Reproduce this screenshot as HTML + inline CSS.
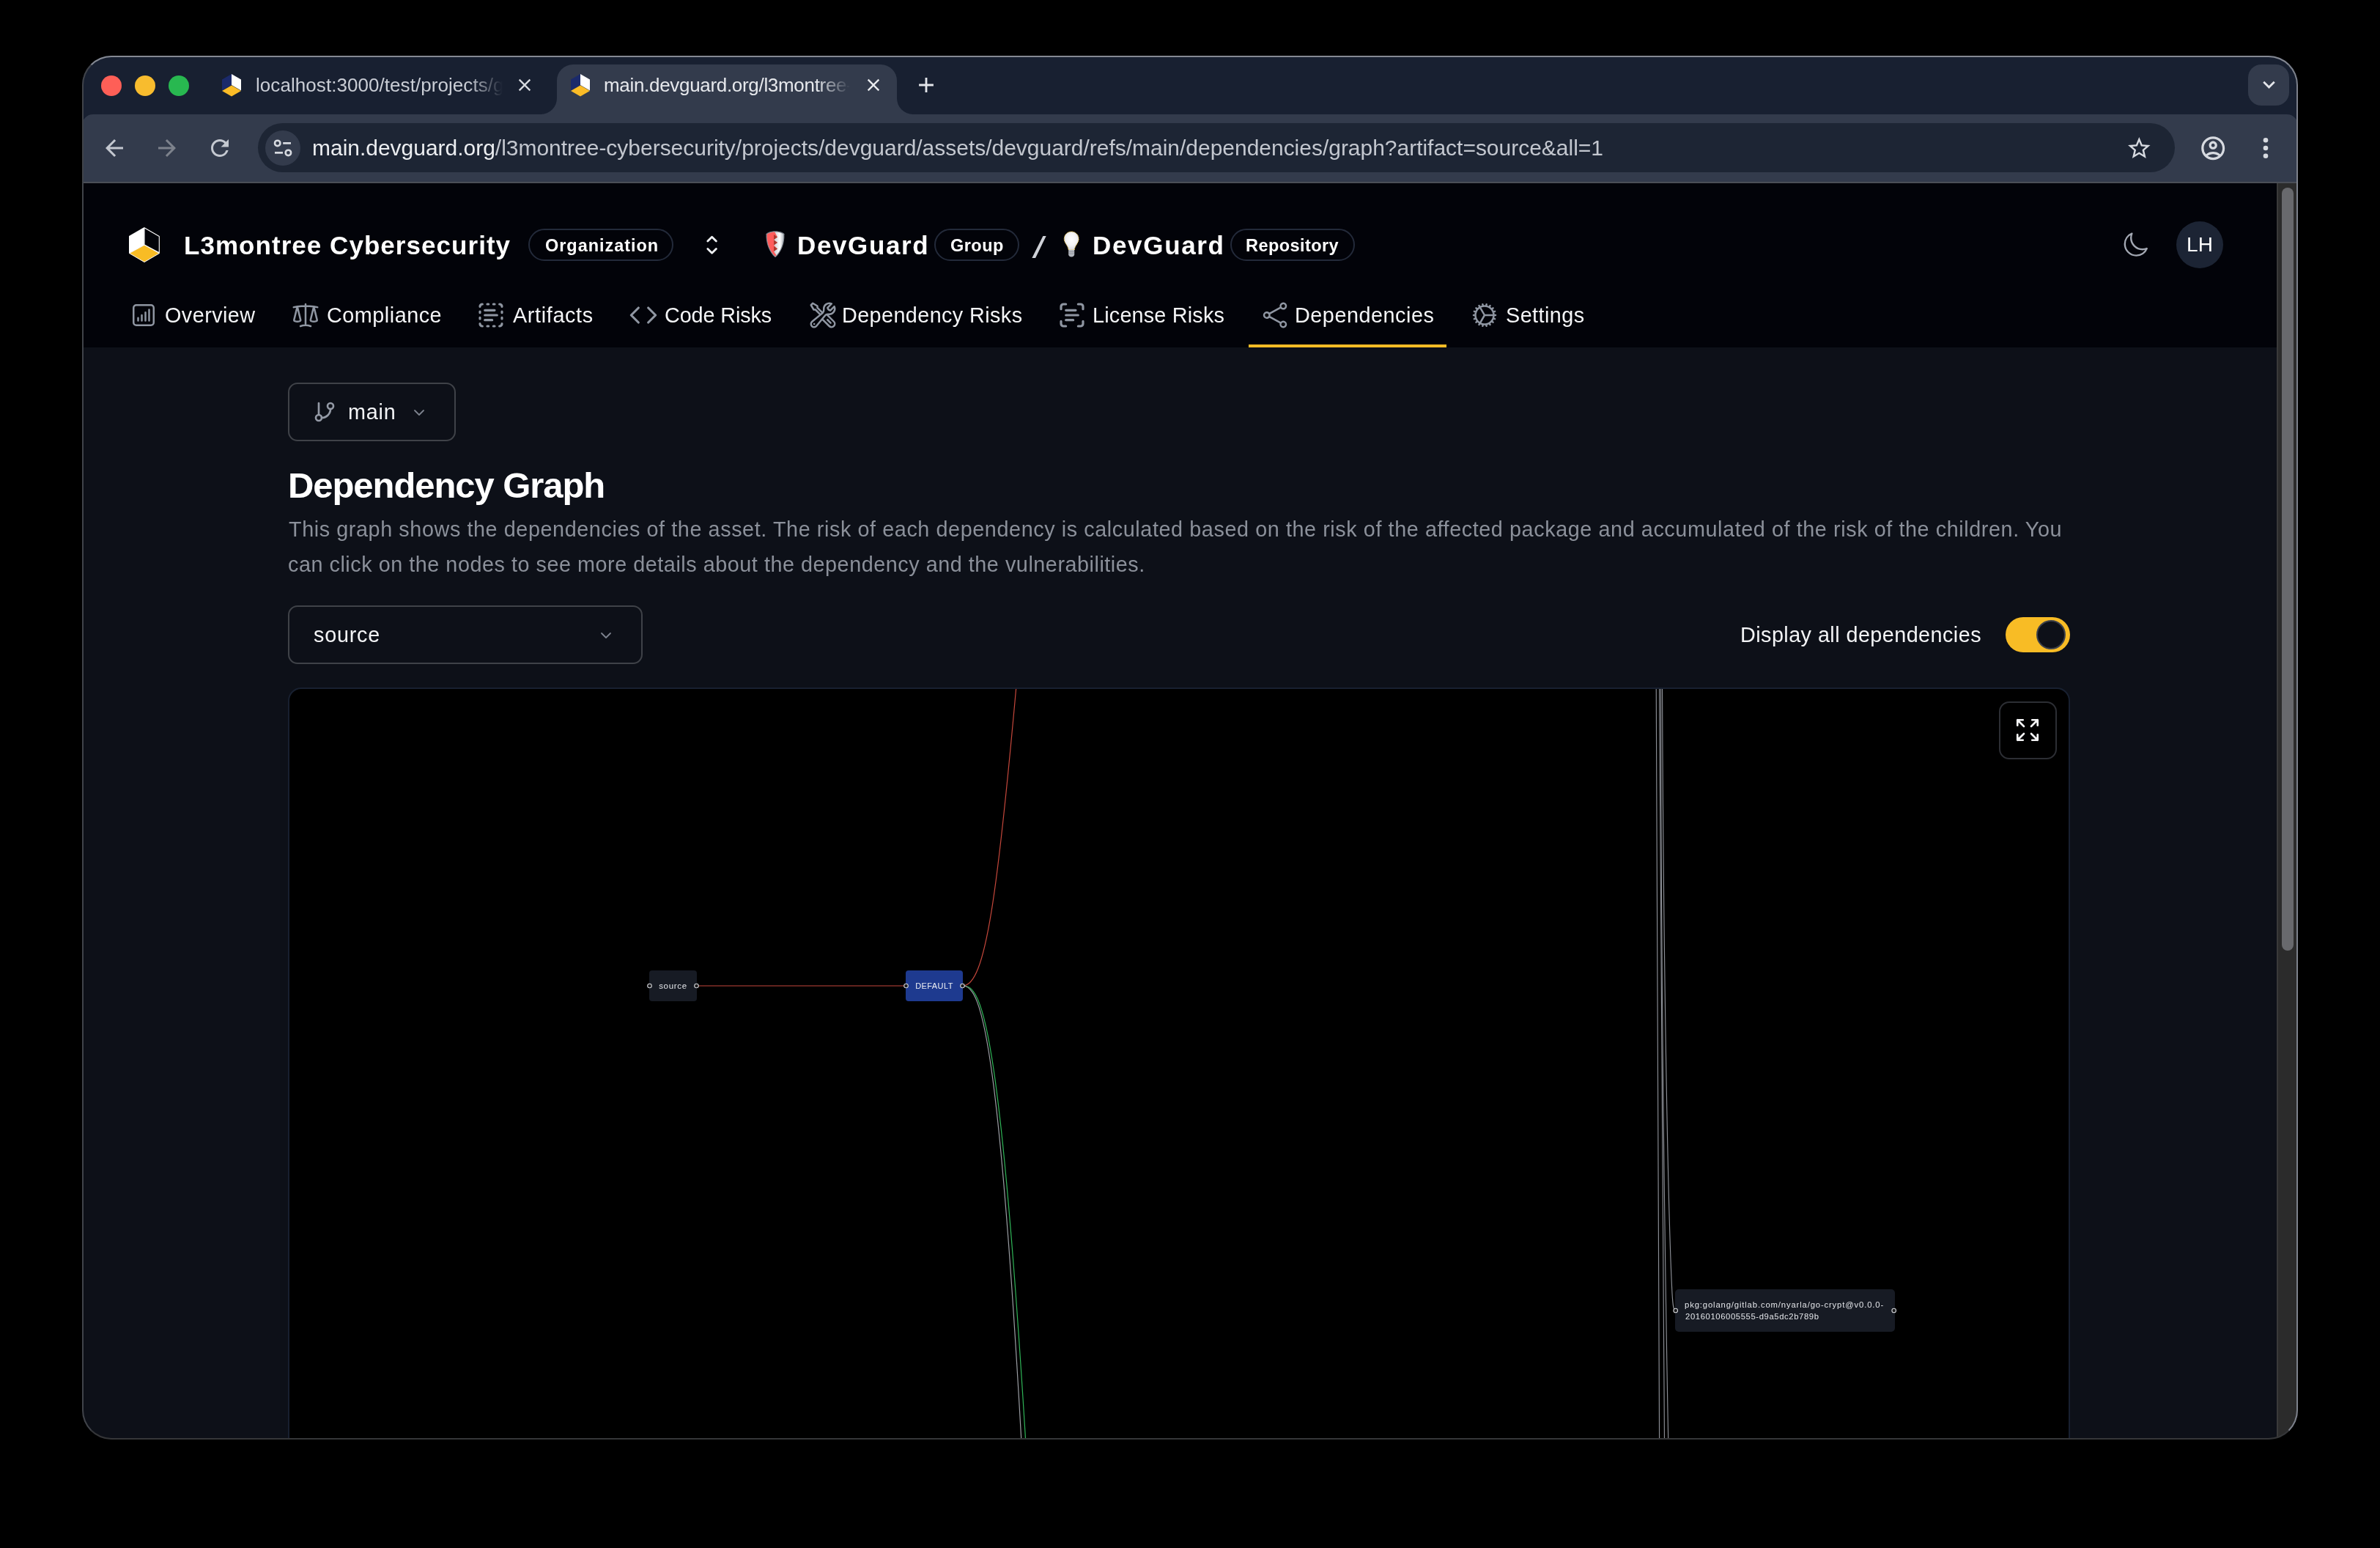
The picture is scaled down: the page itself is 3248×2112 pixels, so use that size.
<!DOCTYPE html>
<html lang="en">
<head>
<meta charset="utf-8">
<title>DevGuard - Dependency Graph</title>
<style>
*{box-sizing:border-box;margin:0;padding:0}
html,body{width:3248px;height:2112px;background:#000;overflow:hidden}
body{position:relative;font-family:"Liberation Sans",sans-serif;color:#fff}
.abs{position:absolute;display:block}
.t{position:absolute;white-space:nowrap;line-height:40px;height:40px;display:block;will-change:transform}
svg{position:absolute;overflow:visible;display:block}
/* ---------- window ---------- */
#win{position:absolute;left:0;top:0;width:3248px;height:2112px;clip-path:inset(76px 112px 148px 112px round 40px);background:#0d1018}
#winborder{position:absolute;left:112px;top:76px;width:3024px;height:1888px;border-radius:40px;border:2px solid;border-color:#858993 #7d818b #353638 #404349}
/* chrome */
#tabstrip{left:112px;top:76px;width:3024px;height:110px;background:#182031}
#toolbar{left:112px;top:156px;width:3024px;height:93px;background:#333b4c;border-radius:15px 15px 0 0}
#tbline{left:112px;top:248px;width:3024px;height:2px;background:#4a4e57}
#acttab{left:760px;top:88px;width:464px;height:68px;background:#333b4c;border-radius:22px 22px 0 0}
.foot{width:22px;height:22px;top:134px;background:#333b4c;position:absolute}
.foot i{position:absolute;left:0;top:0;width:22px;height:22px;background:#182031;display:block}
#omni{left:352px;top:168px;width:2616px;height:67px;border-radius:34px;background:#1d2534}
#siteinfo{left:362px;top:178px;width:48px;height:48px;border-radius:24px;background:#333b4c}
#tabsearch{left:3068px;top:88px;width:56px;height:56px;border-radius:18px;background:#333b4c}
.tl{width:28px;height:28px;border-radius:14px;top:103px;position:absolute}
/* page */
#header{left:112px;top:250px;width:2995px;height:224px;background:#020309}
#sbtrack{left:3107px;top:250px;width:29px;height:1714px;background:#2b2b2b;border-left:2px solid #3a3a3a}
#sbthumb{left:3114px;top:256px;width:16px;height:1041px;border-radius:8px;background:#68696d}
.badge{position:absolute;height:44px;top:312px;border:2px solid #232a3a;border-radius:22px;display:block}
.nav{color:#f4f5f7;font-size:28.800px}
</style>
</head>
<body>
<div id="win">
  <!-- ===== browser chrome ===== -->
  <div class="abs" id="tabstrip"></div>
  <div class="abs" id="toolbar"></div>
  <div class="abs" id="tbline"></div>
  <div class="abs" id="acttab"></div>
  <div class="foot" style="left:738px"><i style="border-radius:0 0 22px 0"></i></div>
  <div class="foot" style="left:1224px"><i style="border-radius:0 0 0 22px"></i></div>
  <div class="tl" style="left:138px;background:#fe5f57"></div>
  <div class="tl" style="left:184px;background:#f8bc2e"></div>
  <div class="tl" style="left:230px;background:#28b850"></div>
  <div class="abs" id="tabsearch"></div>
  <div class="abs" id="omni"></div>
  <div class="abs" id="siteinfo"></div>
  <!-- favicons -->
  <svg style="left:300px;top:98px" width="32" height="36" viewBox="300 98 32 36"><polygon points="316,101 329,108.5 329,123.5 316,116" fill="#fff"/><polygon points="316,101 316,116 303,123.5 303,108.5" fill="#1b2a6b"/><polygon points="316,116.5 329,124 316,131.5 303,124" fill="#fbbc27"/></svg>
  <svg style="left:776px;top:98px" width="32" height="36" viewBox="300 98 32 36"><polygon points="316,101 329,108.5 329,123.5 316,116" fill="#fff"/><polygon points="316,101 316,116 303,123.5 303,108.5" fill="#1b2a6b"/><polygon points="316,116.5 329,124 316,131.5 303,124" fill="#fbbc27"/></svg>
  <!-- tab close / new tab -->
  <svg style="left:702px;top:102px" width="28" height="28" viewBox="0 0 24 24"><path fill="#d5d8de" d="M19 6.41L17.59 5 12 10.59 6.41 5 5 6.41 10.59 12 5 17.59 6.41 19 12 13.41 17.59 19 19 17.59 13.41 12z"/></svg>
  <svg style="left:1178px;top:102px" width="28" height="28" viewBox="0 0 24 24"><path fill="#e8eaee" d="M19 6.41L17.59 5 12 10.59 6.41 5 5 6.41 10.59 12 5 17.59 6.41 19 12 13.41 17.59 19 19 17.59 13.41 12z"/></svg>
  <svg style="left:1247px;top:99px" width="34" height="34" viewBox="0 0 24 24"><path fill="#e3e5ea" d="M19 13h-6v6h-2v-6H5v-2h6V5h2v6h6v2z"/></svg>
  <svg style="left:3079.500px;top:99px" width="33" height="33" viewBox="0 0 24 24"><path fill="#e3e5ea" d="M7.41 8.59L12 13.17l4.59-4.58L18 10l-6 6-6-6z"/></svg>
  <!-- nav buttons -->
  <svg style="left:138px;top:184px" width="36" height="36" viewBox="0 0 24 24"><path fill="#c4c8d0" d="M20 11H7.83l5.59-5.59L12 4l-8 8 8 8 1.41-1.41L7.83 13H20v-2z"/></svg>
  <svg style="left:210px;top:184px" width="36" height="36" viewBox="0 0 24 24"><path fill="#7d828c" d="M4 11h12.170l-5.590-5.590L12 4l8 8-8 8-1.410-1.410L16.170 13H4v-2z"/></svg>
  <svg style="left:282px;top:184px" width="36" height="36" viewBox="0 0 24 24"><path fill="#c4c8d0" d="M17.65 6.35A7.958 7.958 0 0 0 12 4c-4.42 0-7.990 3.580-7.990 8s3.570 8 7.990 8c3.730 0 6.840-2.550 7.730-6h-2.080A5.990 5.990 0 0 1 12 18c-3.310 0-6-2.690-6-6s2.690-6 6-6c1.660 0 3.140.69 4.220 1.780L13 11h7V4l-2.350 2.350z"/></svg>
  <!-- site info (tune) -->
  <svg style="left:362px;top:178px" width="48" height="48" viewBox="362 178 48 48" fill="none" stroke="#d7dae0" stroke-width="2.600"><circle cx="378.700" cy="195.400" r="3.700"/><path d="M386.200 195.400H397"/><circle cx="393.400" cy="208.400" r="3.700"/><path d="M375 208.400h11"/></svg>
  <!-- star, profile, menu -->
  <svg style="left:2900.700px;top:184px" width="36.600" height="36.600" viewBox="0 0 24 24"><path fill="#d7dae0" d="M22 9.240l-7.190-.62L12 2 9.190 8.630 2 9.240l5.460 4.730L5.820 21 12 17.270 18.180 21l-1.630-7.030L22 9.240zM12 15.400l-3.760 2.270 1-4.280-3.320-2.880 4.380-.38L12 6.100l1.710 4.040 4.380.38-3.320 2.880 1 4.280L12 15.400z"/></svg>
  <svg style="left:3000.800px;top:182.800px" width="38.400" height="38.400" viewBox="0 0 24 24"><path fill="#d7dae0" d="M12 2C6.480 2 2 6.480 2 12s4.480 10 10 10 10-4.480 10-10S17.520 2 12 2zM7.350 18.500C8.660 17.560 10.260 17 12 17s3.340.56 4.650 1.500c-1.310.94-2.910 1.500-4.650 1.500s-3.340-.56-4.650-1.500zm10.790-1.380a9.947 9.947 0 0 0-12.280 0A7.957 7.957 0 0 1 4 12c0-4.420 3.580-8 8-8s8 3.580 8 8c0 1.950-.7 3.730-1.860 5.120zM12 6c-1.930 0-3.500 1.570-3.500 3.500S10.070 13 12 13s3.500-1.570 3.500-3.500S13.930 6 12 6zm0 5c-.83 0-1.500-.67-1.500-1.500S11.170 8 12 8s1.500.67 1.500 1.500S12.830 11 12 11z"/></svg>
  <svg style="left:3080px;top:180px" width="24" height="44" viewBox="3080 180 24 44" fill="#d7dae0"><circle cx="3092" cy="191.300" r="3.300"/><circle cx="3092" cy="202" r="3.300"/><circle cx="3092" cy="212.800" r="3.300"/></svg>
  <!-- chrome text -->
  <span class="t" id="tab1" style="left:349px;top:96px;width:337px;overflow:hidden;font-size:26px;color:#c9cdd5;-webkit-mask-image:linear-gradient(90deg,#000 0,#000 290px,transparent 337px)"><span id="tab1a" style="letter-spacing:0.061px">localhost:3000/test/projects/</span>gitlab</span>
  <span class="t" id="tab2" style="left:824px;top:96px;width:336px;overflow:hidden;font-size:26px;color:#e6e8ec;-webkit-mask-image:linear-gradient(90deg,#000 0,#000 290px,transparent 336px)"><span id="tab2a" style="letter-spacing:-0.313px">main.devguard.org/l3montree</span>-cyber</span>
  <span class="t" id="url" style="left:426.0px;top:182px;font-size:30px;color:#c3c7cf;letter-spacing:-0.019px"><span style="color:#eceef1">main.devguard.org</span>/l3montree-cybersecurity/projects/devguard/assets/devguard/refs/main/dependencies/graph?artifact=source&amp;all=1</span>

  <!-- ===== page ===== -->
  <div class="abs" id="header"></div>
  <div class="abs" id="sbtrack"></div>
  <div class="abs" id="sbthumb"></div>
  <!-- logo -->
  <svg style="left:174px;top:308px" width="46" height="52" viewBox="174 308 46 52"><polygon points="196.800,310 196.800,334.500 176,345.800 176,322" fill="#fff"/><polygon points="197,310.800 217.300,322.500 217.300,344.800 197,334" fill="#020309" stroke="#fff" stroke-width="1.100" stroke-linejoin="round"/><polygon points="197,334.300 217.500,345.500 197,357.600 176.500,345.500" fill="#f8bc25" stroke="#fff" stroke-width="1"/></svg>
  <span class="t" id="org" style="left:251.0px;top:314.500px;font-size:35px;font-weight:700;color:#fff;letter-spacing:1.044px">L3montree Cybersecurity</span>
  <span class="badge" style="left:721px;width:198px"></span>
  <span class="t" id="b1" style="left:743.6px;top:314.900px;font-size:23.500px;font-weight:700;letter-spacing:0.962px">Organization</span>
  <svg style="left:960px;top:318px" width="24" height="32" viewBox="960 318 24 32" fill="none" stroke="#eef0f3" stroke-width="2.800" stroke-linecap="round" stroke-linejoin="round"><path d="M965.800 329 971.600 323.200 977.400 329M965.800 339.500 971.600 345.300 977.400 339.500"/></svg>
  <!-- shield emoji -->
  <svg style="left:1044px;top:314px" width="28" height="38" viewBox="1044 314 28 38"><defs><linearGradient id="sg" x1="0" x2="1" y1="0" y2="0"><stop offset="0" stop-color="#aab0b8"/><stop offset=".45" stop-color="#c9cdd2"/><stop offset=".72" stop-color="#ffffff"/><stop offset="1" stop-color="#8d949d"/></linearGradient><clipPath id="sc"><path d="M1058 316.500C1052.500 316.500 1047.500 318.600 1046.800 319.800C1046.200 331 1050.500 343 1058 350C1065.500 343 1069.800 331 1069.200 319.800C1068.500 318.600 1063.500 316.500 1058 316.500Z"/></clipPath></defs><path d="M1058 315.300C1052 315.300 1046.600 317.600 1045.600 319.200C1044.900 331.500 1049.600 344.200 1058 351.300C1066.400 344.200 1071.100 331.500 1070.400 319.200C1069.400 317.600 1064 315.300 1058 315.300Z" fill="#7b828b"/><g clip-path="url(#sc)"><rect x="1044" y="314" width="28" height="38" fill="url(#sg)"/><path d="M1044 314H1056L1061 323.500 1056 327 1061 331 1056 334.500 1061 339.500 1056 343 1060 349 1050 352 1044 340Z" fill="#ff5c5c"/><path d="M1056 320 1061 323.500 1056 327ZM1056 327.500 1061 331 1056 334.500ZM1056 336 1061 339.500 1056 343Z" fill="#a93a30"/></g></svg>
  <span class="t" id="dg1" style="left:1087.9px;top:314.500px;font-size:35px;font-weight:700;letter-spacing:1.617px">DevGuard</span>
  <span class="badge" style="left:1275px;width:116px"></span>
  <span class="t" id="b2" style="left:1297.0px;top:314.900px;font-size:23.500px;font-weight:700;letter-spacing:0.475px">Group</span>
  <svg style="left:1404px;top:318px" width="28" height="38" viewBox="1404 318 28 38"><polygon points="1423.400,322 1427.700,322 1413.100,352 1408.400,352" fill="#cfd2d8"/></svg>
  <!-- bulb emoji -->
  <svg style="left:1450px;top:314px" width="26" height="38" viewBox="1450 314 26 38"><defs><radialGradient id="bg" cx=".5" cy=".42" r=".55"><stop offset="0" stop-color="#fff"/><stop offset=".6" stop-color="#f4f4f6"/><stop offset="1" stop-color="#dcdce0"/></radialGradient></defs><path d="M1462.200 316c-5.600 0-10 4.400-10 10 0 3.400 2 6 3.800 9 1.100 1.900 1.800 3.600 2.100 6h8.200c.3-2.400 1-4.100 2.100-6 1.800-3 3.800-5.600 3.800-9 0-5.600-4.400-10-10-10z" fill="url(#bg)" stroke="#f5c62c" stroke-width="1" stroke-dasharray="1.200 1.300"/><path d="M1458.200 341h8v6.200c0 1.600-1.600 3.300-4 3.300s-4-1.700-4-3.300z" fill="#b3b7be"/><path d="M1458.200 343.500h8M1458.200 346h8" stroke="#8d9199" stroke-width=".8"/></svg>
  <span class="t" id="dg2" style="left:1490.8px;top:314.500px;font-size:35px;font-weight:700;letter-spacing:1.674px">DevGuard</span>
  <span class="badge" style="left:1679px;width:170px"></span>
  <span class="t" id="b3" style="left:1700.3px;top:314.900px;font-size:23.500px;font-weight:700;letter-spacing:0.428px">Repository</span>
  <!-- moon + avatar -->
  <svg style="left:2894.700px;top:314.900px" width="38.400" height="38.400" viewBox="0 0 24 24" fill="none" stroke="#a3a8b3" stroke-width="1.500" stroke-linecap="round" stroke-linejoin="round"><path d="M21.752 15.002A9.720 9.720 0 0 1 18 15.750c-5.385 0-9.750-4.365-9.750-9.750 0-1.330.266-2.597.748-3.752A9.753 9.753 0 0 0 3 11.250C3 16.635 7.365 21 12.750 21a9.753 9.753 0 0 0 9.002-5.998Z"/></svg>
  <span class="abs" style="left:2970px;top:302px;width:64px;height:64px;border-radius:32px;background:#1c2434"></span>
  <span class="t" id="lh" style="left:2970px;top:314px;width:64px;text-align:center;font-size:28px;color:#fff">LH</span>
  <!-- nav icons (40px, top 410) -->
  <svg style="left:176px;top:410px" width="40" height="40" viewBox="0 0 24 24" fill="none" stroke="#8f96a2" stroke-width="1.500" stroke-linecap="round" stroke-linejoin="round"><path d="M7.500 14.250v2.250m3-4.500v4.500m3-6.750v6.750m3-9v9M6 20.250h12A2.250 2.250 0 0 0 20.250 18V6A2.250 2.250 0 0 0 18 3.750H6A2.250 2.250 0 0 0 3.750 6v12A2.250 2.250 0 0 0 6 20.250Z"/></svg>
  <svg style="left:397px;top:410px" width="40" height="40" viewBox="0 0 24 24" fill="none" stroke="#8f96a2" stroke-width="1.500" stroke-linecap="round" stroke-linejoin="round"><path d="M12 3v17.250m0 0c-1.472 0-2.882.265-4.185.750M12 20.250c1.472 0 2.882.265 4.185.750M18.750 4.970A48.416 48.416 0 0 0 12 4.500c-2.291 0-4.545.160-6.750.470m13.500 0c1.010.143 2.010.317 3 .520m-3-.520 2.620 10.726c.122.499-.106 1.028-.589 1.202a5.988 5.988 0 0 1-2.031.352 5.988 5.988 0 0 1-2.031-.352c-.483-.174-.711-.703-.590-1.202L18.750 4.971Zm-16.500.520c.990-.203 1.990-.377 3-.520m0 0 2.620 10.726c.122.499-.106 1.028-.589 1.202a5.989 5.989 0 0 1-2.031.352 5.989 5.989 0 0 1-2.031-.352c-.483-.174-.711-.703-.590-1.202L5.250 4.971Z"/></svg>
  <svg style="left:650px;top:410px" width="40" height="40" viewBox="0 0 24 24" fill="none" stroke="#8f96a2" stroke-width="1.900" stroke-linecap="round" stroke-linejoin="round"><path d="M5 3a2 2 0 0 0-2 2M19 3a2 2 0 0 1 2 2M21 19a2 2 0 0 1-2 2M5 21a2 2 0 0 1-2-2M9 3h1M9 21h1M14 3h1M14 21h1M3 9v1M21 9v1M3 14v1M21 14v1M7 8h8M7 12h10M7 16h6"/></svg>
  <svg style="left:858px;top:410px" width="40" height="40" viewBox="0 0 24 24" fill="none" stroke="#8f96a2" stroke-width="1.900" stroke-linecap="round" stroke-linejoin="round"><path d="m16 18 6-6-6-6M8 6l-6 6 6 6"/></svg>
  <svg style="left:1102.500px;top:410px" width="40" height="40" viewBox="0 0 24 24" fill="none" stroke="#8f96a2" stroke-width="1.500" stroke-linecap="round" stroke-linejoin="round"><path d="M11.420 15.170 17.250 21A2.652 2.652 0 0 0 21 17.250l-5.877-5.877M11.420 15.170l2.496-3.030c.317-.384.740-.626 1.208-.766M11.420 15.170l-4.655 5.653a2.548 2.548 0 1 1-3.586-3.586l6.837-5.630m5.108-.233c.550-.164 1.163-.188 1.743-.140a4.500 4.500 0 0 0 4.486-6.336l-3.276 3.277a3.004 3.004 0 0 1-2.250-2.250l3.276-3.276a4.500 4.500 0 0 0-6.336 4.486c.091 1.076-.071 2.264-.904 2.950l-.102.085m-1.745 1.437L5.909 7.500H4.500L2.250 3.750l1.500-1.500L7.500 4.500v1.409l4.260 4.260m-1.745 1.437 1.745-1.437m6.615 8.206L15.750 15.750M4.867 19.125h.008v.008h-.008v-.008Z"/></svg>
  <svg style="left:1443px;top:410px" width="40" height="40" viewBox="0 0 24 24" fill="none" stroke="#8f96a2" stroke-width="1.900" stroke-linecap="round" stroke-linejoin="round"><path d="M3 7V5a2 2 0 0 1 2-2h2M17 3h2a2 2 0 0 1 2 2v2M21 17v2a2 2 0 0 1-2 2h-2M7 21H5a2 2 0 0 1-2-2v-2M7 8h8M7 12h10M7 16h6"/></svg>
  <svg style="left:1720px;top:410px" width="40" height="40" viewBox="0 0 24 24" fill="none" stroke="#8f96a2" stroke-width="1.500" stroke-linecap="round" stroke-linejoin="round"><path d="M7.217 10.907a2.250 2.250 0 1 0 0 2.186m0-2.186c.180.324.283.696.283 1.093s-.103.770-.283 1.093m0-2.186 9.566-5.314m-9.566 7.500 9.566 5.314m0 0a2.250 2.250 0 1 0 3.935 2.186 2.250 2.250 0 0 0-3.935-2.186Zm0-12.814a2.250 2.250 0 1 0 3.933-2.185 2.250 2.250 0 0 0-3.933 2.185Z"/></svg>
  <svg style="left:2006px;top:410px" width="40" height="40" viewBox="0 0 24 24" fill="none" stroke="#8f96a2" stroke-width="1.500" stroke-linecap="round" stroke-linejoin="round"><path d="M4.500 12a7.500 7.500 0 0 0 15 0m-15 0a7.500 7.500 0 1 1 15 0m-15 0H3m16.500 0H21m-1.500 0H12m-8.457 3.077 1.410-.513m14.095-5.130 1.410-.513M5.106 17.785l1.150-.964m11.490-9.642 1.149-.964M7.501 19.795l.750-1.300m7.500-12.990.750-1.300m-6.063 16.658.260-1.477m2.605-14.772.260-1.477m0 17.726-.260-1.477M10.698 4.614l-.260-1.477M16.500 19.794l-.750-1.299M7.500 4.205 12 12m6.894 5.785-1.149-.964M6.256 7.178l-1.150-.964m15.352 8.864-1.410-.513M4.954 9.435l-1.410-.514M12.002 12l-3.750 6.495"/></svg>
  <!-- nav text (baseline 440) -->
  <span class="t nav" id="n1" style="left:224.5px;top:410.200px;letter-spacing:0.442px">Overview</span>
  <span class="t nav" id="n2" style="left:445.9px;top:410.200px;letter-spacing:0.505px">Compliance</span>
  <span class="t nav" id="n3" style="left:699.6px;top:410.200px;letter-spacing:0.643px">Artifacts</span>
  <span class="t nav" id="n4" style="left:906.6px;top:410.200px;letter-spacing:-0.108px">Code Risks</span>
  <span class="t nav" id="n5" style="left:1149.0px;top:410.200px;letter-spacing:0.396px">Dependency Risks</span>
  <span class="t nav" id="n6" style="left:1490.8px;top:410.200px;letter-spacing:0.189px">License Risks</span>
  <span class="t nav" id="n7" style="left:1767.3px;top:410.200px;letter-spacing:0.524px">Dependencies</span>
  <span class="t nav" id="n8" style="left:2054.5px;top:410.200px;letter-spacing:0.433px">Settings</span>
  <span class="abs" style="left:1704px;top:470px;width:270px;height:4px;background:#f8bc25"></span>
  <!-- branch button -->
  <span class="abs" style="left:393px;top:522px;width:229px;height:80px;border:2px solid #3f4248;border-radius:13px"></span>
  <svg style="left:427px;top:546px" width="32" height="32" viewBox="0 0 24 24" fill="none" stroke="#949aa6" stroke-width="2" stroke-linecap="round" stroke-linejoin="round"><line x1="6" y1="3" x2="6" y2="15"/><circle cx="18" cy="6" r="3"/><circle cx="6" cy="18" r="3"/><path d="M18 9a9 9 0 0 1-9 9"/></svg>
  <span class="t" id="m1" style="left:474.6px;top:542.200px;font-size:28.800px;color:#f3f4f6;letter-spacing:0.765px">main</span>
  <svg style="left:560px;top:551px" width="24" height="24" viewBox="0 0 24 24" fill="none" stroke="#7d838e" stroke-width="1.800" stroke-linecap="round" stroke-linejoin="round"><path d="m6 9 6 6 6-6"/></svg>
  <!-- heading + description -->
  <span class="t" id="h1" style="left:392.7px;top:632.200px;line-height:60px;height:60px;font-size:49px;font-weight:700;color:#fff;letter-spacing:-1.071px">Dependency Graph</span>
  <span class="t" id="d1" style="left:393.5px;top:702.300px;font-size:28.800px;color:#8b909a;letter-spacing:0.573px">This graph shows the dependencies of the asset. The risk of each dependency is calculated based on the risk of the affected package and accumulated of the risk of the children. You</span>
  <span class="t" id="d2" style="left:392.5px;top:750.300px;font-size:28.800px;color:#8b909a;letter-spacing:0.522px">can click on the nodes to see more details about the dependency and the vulnerabilities.</span>
  <!-- artifact select -->
  <span class="abs" style="left:393px;top:826px;width:484px;height:80px;border:2px solid #3f4248;border-radius:13px"></span>
  <span class="t" id="m2" style="left:428.0px;top:846.200px;font-size:28.800px;color:#f3f4f6;letter-spacing:0.751px">source</span>
  <svg style="left:815px;top:855px" width="24" height="24" viewBox="0 0 24 24" fill="none" stroke="#7d838e" stroke-width="1.800" stroke-linecap="round" stroke-linejoin="round"><path d="m6 9 6 6 6-6"/></svg>
  <!-- toggle -->
  <span class="t" id="m3" style="left:2375.1px;top:846.300px;font-size:28.800px;color:#f3f4f6;letter-spacing:0.433px">Display all dependencies</span>
  <span class="abs" style="left:2737px;top:842px;width:88px;height:48px;border-radius:24px;background:#f8bc25"></span>
  <span class="abs" style="left:2779px;top:846px;width:40px;height:40px;border-radius:20px;background:#0d1018;border:2px solid #3d414b"></span>
  <!-- graph panel -->
  <span class="abs" id="panel" style="left:393px;top:938px;width:2432px;height:1100px;background:#000;border:2px solid #182030;border-radius:18px"></span>
  <svg style="left:0;top:0" width="3248" height="2112" viewBox="0 0 3248 2112" fill="none" stroke-linecap="round"><defs><clipPath id="pc"><rect x="395" y="940" width="2428" height="1100"/></clipPath></defs><g clip-path="url(#pc)">
    <path d="M951 1345H1236" stroke="#c4473b" stroke-width="1.200"/>
    <path d="M1314 1345C1344.600 1345 1361.500 1226.600 1390.600 895" stroke="#c4473b" stroke-width="1.200"/>
    <path d="M1314 1345C1339.800 1345 1368.400 1381.300 1410.800 2157.200" stroke="#2fb457" stroke-width="1.200"/>
    <path d="M1314 1345C1339.500 1345 1366.500 1413.500 1402.600 2129" stroke="#9a9da3" stroke-width="1.200"/>
    <g stroke="#8c8f96" stroke-width="1.150">
      <path d="M2260.200 930L2264.600 1970"/>
      <path d="M2264.500 930Q2266 1450 2271.500 1970"/>
      <path d="M2266.500 930Q2267 1450 2276.800 1970"/>
      <path d="M2268.500 930C2270 1300 2276 1650 2282 1765C2283 1782 2284 1788 2286.500 1788"/>
    </g></g>
  </svg>
  <!-- nodes -->
  <span class="abs" style="left:886px;top:1324px;width:65px;height:42px;border-radius:4px;background:#171b24"></span>
  <span class="t" id="g1" style="left:886px;top:1325px;width:65px;text-align:center;font-size:11.500px;color:#e4e6ea;letter-spacing:0.694px">source</span>
  <span class="abs" style="left:1236px;top:1324px;width:78px;height:42px;border-radius:4px;background:#1e3a8f"></span>
  <span class="t" id="g2" style="left:1236px;top:1325px;width:78px;text-align:center;font-size:11px;color:#eef0f4;letter-spacing:0.416px">DEFAULT</span>
  <span class="abs" style="left:2286px;top:1759px;width:300px;height:58px;border-radius:5px;background:#171b24"></span>
  <span class="t" id="g3" style="left:2298.8px;top:1760px;font-size:11.300px;color:#e4e6ea;letter-spacing:0.851px">pkg:golang/gitlab.com/nyarla/go-crypt@v0.0.0-</span>
  <span class="t" id="g4" style="left:2299.8px;top:1776px;font-size:11.300px;color:#e4e6ea;letter-spacing:0.597px">20160106005555-d9a5dc2b789b</span>
  <svg style="left:0;top:0" width="3248" height="2112" viewBox="0 0 3248 2112" fill="#1c1c1e" stroke="#d4d6da" stroke-width="1.100"><circle cx="886.500" cy="1345" r="2.800"/><circle cx="950.500" cy="1345" r="2.800"/><circle cx="1236.500" cy="1345" r="2.800"/><circle cx="1313.500" cy="1345" r="2.800"/><circle cx="2286.700" cy="1788" r="2.800"/><circle cx="2584.700" cy="1788" r="2.800"/></svg>
  <!-- fullscreen button -->
  <span class="abs" style="left:2728px;top:957px;width:79px;height:79px;border:2px solid #2c2e34;border-radius:14px;background:#000"></span>
  <svg style="left:2747px;top:976px" width="40" height="40" viewBox="0 0 24 24" fill="none" stroke="#f4f4f5" stroke-width="1.600" stroke-linecap="round" stroke-linejoin="round"><path d="M3.750 3.750v4.500m0-4.500h4.500m-4.500 0L9 9M3.750 20.250v-4.500m0 4.500h4.500m-4.500 0L9 15M20.250 3.750h-4.500m4.500 0v4.500m0-4.500L15 9m5.250 11.250h-4.500m4.500 0v-4.500m0 4.500L15 15"/></svg>
</div>
<div id="winborder"></div>
</body>
</html>
